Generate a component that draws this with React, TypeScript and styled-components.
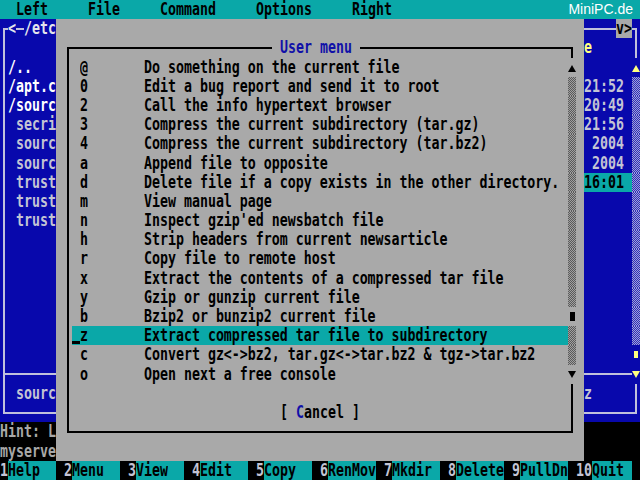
import React from "react";
import styled, { createGlobalStyle } from "styled-components";

const CW = 8;
const RH = 19.2;

const C = {
  blue: "#0808ac",
  cyan: "#0aa8a8",
  grey: "#a9a9a9",
  black: "#000000",
  white: "#ffffff",
  text: "#c4c4d4",
  dim: "#a8a8a8",
  yellow: "#ffff80",
  title: "#1010a8",
  line: "#c0c0dc",
};

const Global = createGlobalStyle`
  html, body { margin: 0; padding: 0; background: #000; }
  body { width: 640px; height: 480px; overflow: hidden; }
`;

const Screen = styled.div`
  width: 640px;
  height: 480px;
  display: flex;
  flex-direction: column;
  overflow: hidden;
  background: ${C.black};
  font-family: "DejaVu Sans Mono", "Liberation Mono", monospace;
  font-size: 13.28px;
  font-weight: 700;
  line-height: ${RH}px;
`;

const Txt = styled.span<{ $c?: string }>`
  display: inline-block;
  white-space: pre;
  transform: scaleY(1.3);
  color: ${(p) => p.$c ?? "inherit"};
`;

const Hot = styled.span`
  color: ${C.title};
`;

const Row = styled.div<{ $bg?: string; $c?: string; $pad?: number }>`
  position: relative;
  display: flex;
  flex: none;
  height: ${RH}px;
  padding-left: ${(p) => (p.$pad ?? 0) * CW}px;
  background: ${(p) => p.$bg ?? "transparent"};
  color: ${(p) => p.$c ?? "inherit"};
`;

const Cell = styled.span<{ $w?: number; $bg?: string; $c?: string }>`
  position: relative;
  display: block;
  flex: none;
  width: ${(p) => (p.$w ? `${p.$w * CW}px` : "auto")};
  height: ${RH}px;
  background: ${(p) => p.$bg ?? "transparent"};
  color: ${(p) => p.$c ?? "inherit"};
  white-space: pre;
`;

/* ---------- menu bar ---------- */
const MenuBar = styled.div`
  display: flex;
  flex: none;
  height: ${RH}px;
  padding-left: ${2 * CW}px;
  background: ${C.cyan};
  color: ${C.black};
`;

const MenuItem = styled.div<{ $w: number }>`
  width: ${(p) => p.$w * CW}px;
`;

const Brand = styled.div`
  margin-left: auto;
  margin-right: 7px;
  font-family: "Liberation Sans", Arial, sans-serif;
  font-weight: 400;
  font-size: 14px;
  line-height: 19px;
  color: ${C.white};
`;

/* ---------- middle ---------- */
const Middle = styled.div`
  display: flex;
  flex: none;
  height: ${23 * RH}px;
`;

const SideColumn = styled.div`
  display: flex;
  flex-direction: column;
  width: ${7 * CW}px;
  flex: none;
  background: ${C.black};
`;

const LeftPanel = styled.div`
  position: relative;
  display: flex;
  flex-direction: column;
  height: ${21 * RH}px;
  flex: none;
  overflow: hidden;
  background: ${C.blue};
  color: ${C.text};
  &::before {
    content: "";
    position: absolute;
    left: 3px;
    right: -20px;
    top: ${RH / 2 - 1}px;
    bottom: ${RH / 2 - 1}px;
    border: 2px solid ${C.line};
  }
`;

const PanelRule = styled.div<{ $left: number }>`
  position: relative;
  flex: none;
  height: ${RH}px;
  &::before {
    content: "";
    position: absolute;
    left: ${(p) => p.$left}px;
    right: 0;
    top: ${RH / 2 - 1}px;
    height: 2px;
    background: ${C.line};
  }
`;

const ConsoleLine = styled.div`
  flex: none;
  height: ${RH}px;
  color: ${C.dim};
  background: ${C.black};
  white-space: pre;
`;

/* ---------- dialog ---------- */
const Dialog = styled.div`
  flex: none;
  width: ${66 * CW}px;
  height: ${23 * RH}px;
  box-sizing: border-box;
  padding: ${RH}px ${CW}px;
  background: ${C.grey};
  color: ${C.black};
`;

const Frame = styled.div`
  position: relative;
  display: flex;
  flex-direction: column;
  height: ${21 * RH}px;
  &::before {
    content: "";
    position: absolute;
    left: 3px;
    right: 3px;
    top: ${RH / 2 - 1}px;
    bottom: ${RH / 2 - 1}px;
    border: 2px solid ${C.black};
  }
`;

const ItemsArea = styled.div`
  display: flex;
  flex: none;
  height: ${17 * RH}px;
  padding-left: ${CW}px;
`;

const ItemList = styled.div`
  display: flex;
  flex-direction: column;
  width: ${62 * CW}px;
  flex: none;
`;

const CursorCell = styled.span`
  position: relative;
  display: flex;
  align-items: flex-end;
  width: ${CW}px;
  height: ${RH}px;
  flex: none;
`;

const CursorBar = styled.span`
  display: block;
  width: ${CW}px;
  height: 3px;
  margin-bottom: 1px;
  background: ${C.black};
`;

const ScrollCol = styled.div`
  position: relative;
  display: flex;
  flex-direction: column;
  width: ${CW}px;
  flex: none;
`;

const ScrollCell = styled.div<{ $bg?: string; $hatch?: [string, string] }>`
  position: relative;
  display: flex;
  align-items: center;
  justify-content: center;
  height: ${RH}px;
  flex: none;
  background: ${(p) =>
    p.$hatch
      ? `repeating-conic-gradient(${p.$hatch[0]} 0 25%, ${p.$hatch[1]} 0 50%) 0 0 / 2px 2px`
      : p.$bg ?? "transparent"};
`;

const Arrow = styled.span<{ $up?: boolean; $c: string }>`
  display: block;
  width: 0;
  height: 0;
  border-left: 4px solid transparent;
  border-right: 4px solid transparent;
  ${(p) =>
    p.$up
      ? `border-bottom: 7px solid ${p.$c}; margin-top: 2px;`
      : `border-top: 7px solid ${p.$c}; margin-top: 0px;`}
`;

const Thumb = styled.span<{ $c: string; $w: number; $h: number }>`
  display: block;
  width: ${(p) => p.$w}px;
  height: ${(p) => p.$h}px;
  background: ${(p) => p.$c};
`;

/* ---------- right panel ---------- */
const RightPanel = styled.div`
  position: relative;
  display: flex;
  height: ${21 * RH}px;
  flex: none;
  overflow: hidden;
  background: ${C.blue};
  color: ${C.text};
  &::before {
    content: "";
    position: absolute;
    left: -10px;
    right: 3px;
    top: ${RH / 2 - 1}px;
    bottom: ${RH / 2 - 1}px;
    border: 2px solid ${C.line};
  }
`;

const PanelContent = styled.div`
  display: flex;
  flex-direction: column;
  width: ${6 * CW}px;
  flex: none;
`;

/* ---------- function keys ---------- */
const KeyBar = styled.div`
  display: flex;
  flex: none;
  height: ${RH}px;
  background: ${C.black};
`;

const KeyNum = styled.span<{ $gap: boolean }>`
  display: block;
  flex: none;
  margin-left: ${(p) => (p.$gap ? CW : 0)}px;
  color: ${C.text};
  white-space: pre;
`;

const KeyLabel = styled.span<{ $w: number }>`
  display: block;
  flex: none;
  width: ${(p) => p.$w * CW}px;
  background: ${C.cyan};
  color: ${C.black};
  white-space: pre;
`;

const menus: [string, number][] = [
  ["Left", 9],
  ["File", 9],
  ["Command", 12],
  ["Options", 12],
  ["Right", 6],
];

const items: [string, string][] = [
  ["@", "Do something on the current file"],
  ["0", "Edit a bug report and send it to root"],
  ["2", "Call the info hypertext browser"],
  ["3", "Compress the current subdirectory (tar.gz)"],
  ["4", "Compress the current subdirectory (tar.bz2)"],
  ["a", "Append file to opposite"],
  ["d", "Delete file if a copy exists in the other directory."],
  ["m", "View manual page"],
  ["n", "Inspect gzip'ed newsbatch file"],
  ["h", "Strip headers from current newsarticle"],
  ["r", "Copy file to remote host"],
  ["x", "Extract the contents of a compressed tar file"],
  ["y", "Gzip or gunzip current file"],
  ["b", "Bzip2 or bunzip2 current file"],
  ["z", "Extract compressed tar file to subdirectory"],
  ["c", "Convert gz<->bz2, tar.gz<->tar.bz2 & tgz->tar.bz2"],
  ["o", "Open next a free console"],
];
const ACTIVE = 14;

const leftFiles: [string, boolean][] = [
  ["/..", true],
  ["/apt.c", true],
  ["/sourc", true],
  [" secri", false],
  [" sourc", false],
  [" sourc", false],
  [" trust", false],
  [" trust", false],
  [" trust", false],
];

const rightTimes = ["21:52", "20:49", "21:56", " 2004", " 2004", "16:01"];

const keys: [string, string, number][] = [
  ["1", "Help", 6],
  ["2", "Menu", 6],
  ["3", "View", 6],
  ["4", "Edit", 6],
  ["5", "Copy", 6],
  ["6", "RenMov", 6],
  ["7", "Mkdir", 6],
  ["8", "Delete", 6],
  ["9", "PullDn", 6],
  ["10", "Quit", 5],
];

const HATCH_GREY: [string, string] = ["#5a5a5a", "#a0a0a0"];
const HATCH_BLUE: [string, string] = ["#2c2cb8", "#a0a0d8"];

function Blank({ n }: { n: number }) {
  return (
    <>
      {Array.from({ length: n }, (_, i) => (
        <Row key={i} />
      ))}
    </>
  );
}

export default function App() {
  return (
    <Screen>
      <Global />
      <MenuBar>
        {menus.map(([m, w]) => (
          <MenuItem key={m} $w={w}>
            <Txt>{m}</Txt>
          </MenuItem>
        ))}
        <Brand>MiniPC.de</Brand>
      </MenuBar>

      <Middle>
        <SideColumn>
          <LeftPanel>
            <Row>
              <Cell $w={1} />
              <Cell $w={1} $bg={C.blue} $c="#e4e4ec">
                <Txt>{"<"}</Txt>
              </Cell>
              <Cell $w={1} />
              <Cell $w={4} $bg={C.blue} $c="#e4e4ec">
                <Txt>/etc</Txt>
              </Cell>
            </Row>
            <Row />
            {leftFiles.map(([name, dir], i) => (
              <Row key={i} $pad={1} $c={dir ? C.white : C.text}>
                <Cell $bg={C.blue}>
                  <Txt>{name}</Txt>
                </Cell>
              </Row>
            ))}
            <Blank n={7} />
            <PanelRule $left={3} />
            <Row $pad={1}>
              <Cell $bg={C.blue}>
                <Txt> sourc</Txt>
              </Cell>
            </Row>
            <Row />
          </LeftPanel>
          <ConsoleLine>
            <Txt>Hint: L</Txt>
          </ConsoleLine>
          <ConsoleLine>
            <Txt>myserve</Txt>
          </ConsoleLine>
        </SideColumn>

        <Dialog>
          <Frame>
            <Row $pad={26}>
              <Cell $w={11} $bg={C.grey} $c={C.title}>
                <Txt> User menu </Txt>
              </Cell>
            </Row>
            <ItemsArea>
              <ItemList>
                {items.map(([k, d], i) => (
                  <Row key={k} $bg={i === ACTIVE ? C.cyan : undefined}>
                    <CursorCell>{i === ACTIVE && <CursorBar />}</CursorCell>
                    <Cell $w={8}>
                      <Txt>{k}</Txt>
                    </Cell>
                    <Cell>
                      <Txt>{d}</Txt>
                    </Cell>
                  </Row>
                ))}
              </ItemList>
              <ScrollCol>
                <ScrollCell $bg={C.grey}>
                  <Arrow $up $c={C.black} />
                </ScrollCell>
                {Array.from({ length: 12 }, (_, i) => (
                  <ScrollCell key={"a" + i} $hatch={HATCH_GREY} />
                ))}
                <ScrollCell $bg={C.grey}>
                  <Thumb $c={C.black} $w={5} $h={9} />
                </ScrollCell>
                {Array.from({ length: 2 }, (_, i) => (
                  <ScrollCell key={"b" + i} $hatch={HATCH_GREY} />
                ))}
                <ScrollCell $bg={C.grey}>
                  <Arrow $c={C.black} />
                </ScrollCell>
              </ScrollCol>
            </ItemsArea>
            <Row />
            <Row $pad={27}>
              <Cell $bg={C.grey}>
                <Txt>
                  {"[ "}
                  <Hot>C</Hot>
                  {"ancel ]"}
                </Txt>
              </Cell>
            </Row>
            <Row />
          </Frame>
        </Dialog>

        <SideColumn>
          <RightPanel>
            <PanelContent>
              <Row>
                <Cell $w={4} />
                <Cell $w={2} $bg={C.grey} $c={C.black}>
                  <Txt>v&gt;</Txt>
                </Cell>
              </Row>
              <Row $c={C.yellow}>
                <Cell $w={1} $bg={C.blue}>
                  <Txt>e</Txt>
                </Cell>
              </Row>
              <Row />
              {rightTimes.map((t, i) => {
                const active = i === rightTimes.length - 1;
                return (
                  <Row key={i}>
                    <Cell
                      $w={6}
                      $bg={active ? C.cyan : C.blue}
                      $c={active ? C.black : C.text}
                    >
                      <Txt>{t}</Txt>
                    </Cell>
                  </Row>
                );
              })}
              <Blank n={9} />
              <PanelRule $left={0} />
              <Row>
                <Cell $w={1} $bg={C.blue}>
                  <Txt>z</Txt>
                </Cell>
              </Row>
              <Row />
            </PanelContent>
            <ScrollCol>
              <ScrollCell />
              <ScrollCell />
              <ScrollCell $bg={C.blue}>
                <Arrow $up $c={C.yellow} />
              </ScrollCell>
              {Array.from({ length: 14 }, (_, i) => (
                <ScrollCell key={"c" + i} $hatch={HATCH_BLUE} />
              ))}
              <ScrollCell $bg={C.blue}>
                <Thumb $c={C.yellow} $w={4} $h={7} />
              </ScrollCell>
              <ScrollCell $bg={C.blue}>
                <Arrow $c={C.yellow} />
              </ScrollCell>
              <ScrollCell />
              <ScrollCell />
            </ScrollCol>
          </RightPanel>
          <ConsoleLine />
          <ConsoleLine />
        </SideColumn>
      </Middle>

      <KeyBar>
        {keys.map(([n, l, w], i) => (
          <React.Fragment key={n}>
            <KeyNum $gap={i > 0}>
              <Txt>{n}</Txt>
            </KeyNum>
            <KeyLabel $w={w}>
              <Txt>{l}</Txt>
            </KeyLabel>
          </React.Fragment>
        ))}
      </KeyBar>
    </Screen>
  );
}
